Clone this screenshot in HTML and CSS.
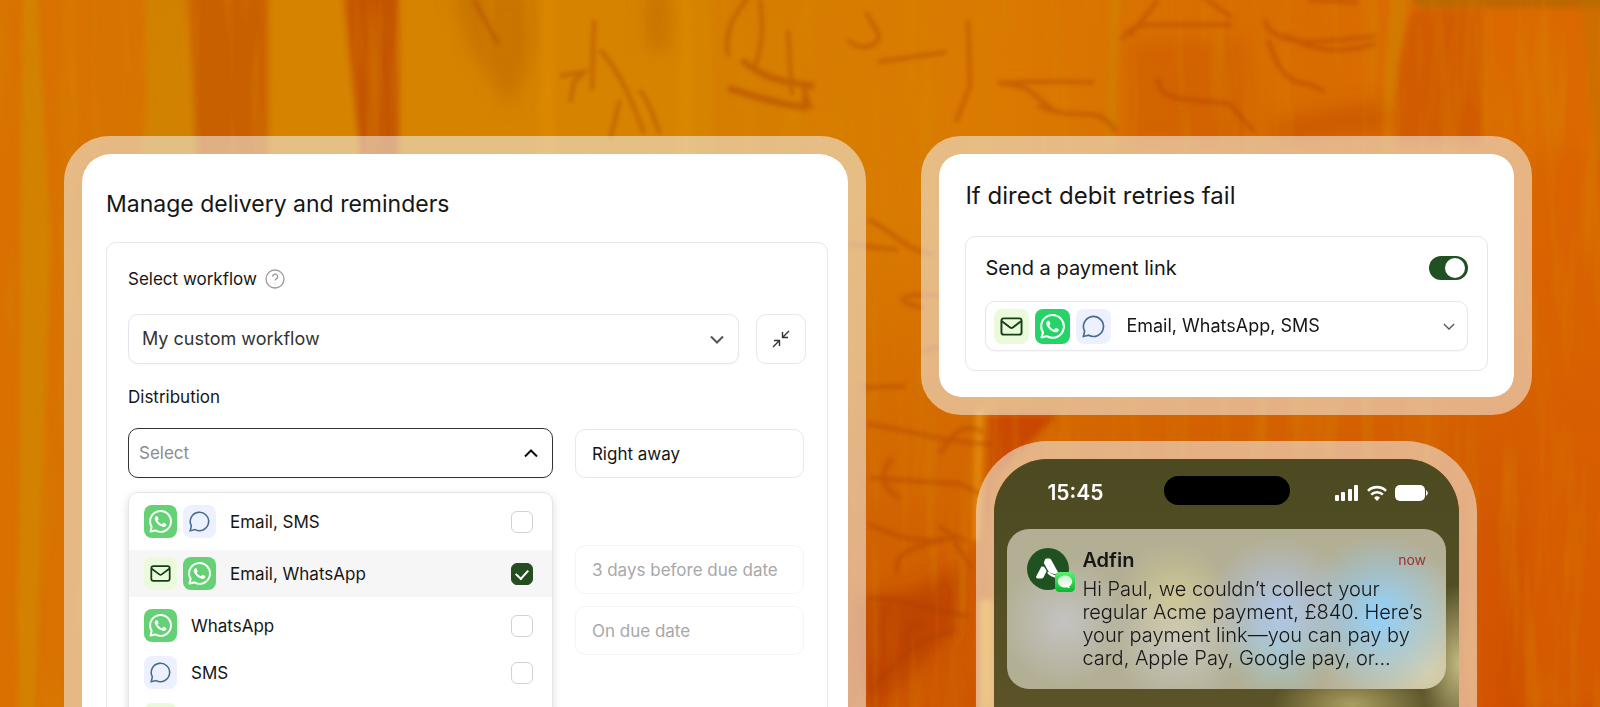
FILE: index.html
```html
<!DOCTYPE html>
<html lang="en">
<head>
    <meta charset="UTF-8">
    <meta name="viewport" content="width=device-width, initial-scale=1.0">
    <title>Manage delivery and reminders</title>
    <link rel="stylesheet" href="styles.css">
</head>
<body>
    <!-- Icon sprite -->
    <svg class="sprite" aria-hidden="true">
        <symbol id="mail" viewBox="0 0 24 24">
            <rect x="1.500" y="3.500" width="21" height="17" rx="2.5"/>
            <path d="M2 6.500 10.600 13a2.300 2.300 0 0 0 2.800 0L22 6.500"/>
        </symbol>
        <symbol id="sms" viewBox="0 0 24 24">
            <path d="M7.400 20.400A9.600 9.600 0 1 0 3.500 16.500L2.300 21.600Z"/>
        </symbol>
        <symbol id="whatsapp" viewBox="0 0 24 24">
            <path d="M17.472 14.382c-.297-.149-1.758-.867-2.03-.967-.273-.099-.471-.148-.67.15-.197.297-.767.966-.94 1.164-.173.199-.347.223-.644.075-.297-.15-1.255-.463-2.39-1.475-.883-.788-1.48-1.761-1.653-2.059-.173-.297-.018-.458.13-.606.134-.133.298-.347.446-.52.149-.174.198-.298.298-.497.099-.198.05-.371-.025-.52-.075-.149-.669-1.612-.916-2.207-.242-.579-.487-.5-.669-.51-.173-.008-.371-.01-.57-.01-.198 0-.52.074-.792.372-.272.297-1.04 1.016-1.04 2.479 0 1.462 1.065 2.875 1.213 3.074.149.198 2.096 3.2 5.077 4.487.709.306 1.262.489 1.694.625.712.227 1.36.195 1.871.118.571-.085 1.758-.719 2.006-1.413.248-.694.248-1.289.173-1.413-.074-.124-.272-.198-.57-.347m-5.421 7.403h-.004a9.87 9.87 0 01-5.031-1.378l-.361-.214-3.741.982.998-3.648-.235-.374a9.86 9.86 0 01-1.51-5.26c.001-5.45 4.436-9.884 9.888-9.884 2.64 0 5.122 1.03 6.988 2.898a9.825 9.825 0 012.893 6.994c-.003 5.45-4.437 9.884-9.885 9.884m8.413-18.297A11.815 11.815 0 0012.05 0C5.495 0 .16 5.335.157 11.892c0 2.096.547 4.142 1.588 5.945L.057 24l6.305-1.654a11.882 11.882 0 005.683 1.448h.005c6.554 0 11.89-5.335 11.893-11.893a11.821 11.821 0 00-3.48-8.413z"/>
        </symbol>
        <symbol id="chevron" viewBox="0 0 14 9">
            <path d="M1 1.500 7 7.500 13 1.500"/>
        </symbol>
    </svg>

    <!-- Woodgrain backdrop -->
    <svg class="backdrop" viewBox="0 0 1600 707" preserveAspectRatio="none" aria-hidden="true">
        <defs>
            <linearGradient id="base" x1="0" x2="1" y1="0" y2="0">
                <stop offset="0" stop-color="#d97000"/>
                <stop offset=".2" stop-color="#d47a00"/>
                <stop offset=".45" stop-color="#d57e00"/>
                <stop offset=".62" stop-color="#db7a00"/>
                <stop offset=".75" stop-color="#d86e00"/>
                <stop offset="1" stop-color="#dc6800"/>
            </linearGradient>
            <linearGradient id="deep" x1="0" x2="0" y1="0" y2="1">
                <stop offset=".3" stop-color="#c84400" stop-opacity="0"/>
                <stop offset="1" stop-color="#c84400" stop-opacity=".7"/>
            </linearGradient>
            <filter id="soft" x="-20%" width="140%" y="-20%" height="140%"><feGaussianBlur stdDeviation="3"/></filter>
            <filter id="line" x="-20%" width="140%" y="-20%" height="140%"><feGaussianBlur stdDeviation="2"/></filter>
            <filter id="wide" x="-40%" width="180%" y="-40%" height="180%"><feGaussianBlur stdDeviation="9"/></filter>
            <filter id="fibre" x="0" width="100%" y="0" height="100%">
                <feTurbulence type="fractalNoise" baseFrequency=".05 .006" numOctaves="3" seed="4"/>
                <feColorMatrix values="0 0 0 0 .68  0 0 0 0 .24  0 0 0 0 0  1.800 0 0 0 -.8"/>
            </filter>
        </defs>
        <rect width="1600" height="707" fill="url(#base)"/>
        <rect x="820" width="780" height="707" fill="url(#deep)"/>
        <g filter="url(#soft)">
            <path fill="#d28200" d="M22-10h15l14 250-16 480H18z"/>
            <path fill="#d08200" d="M146-10h37l14 150v40h-50z"/>
            <path fill="#c96000" d="M187-10h80v190h-70z"/>
            <path fill="#d68400" d="M271-10h68l24 190h-92z"/>
            <path fill="#c45400" d="M344-10h54v190h-36z"/>
            <path fill="#d68400" d="M402-10h310v190H402z"/>
            <path fill="#de8a00" d="M540-10h14v190h-14zM680-10h12v190h-12z" opacity=".7"/>
            <path fill="#cb5400" d="M1412 10c-20 60-18 100-20 135h90V10z" opacity=".6"/>
            <path fill="#c99200" d="M1110-10h10l-6 160h-8zM1390-10h20l-18 120h-8z" opacity=".4"/>
            <path fill="#a86600" d="M1400-10h210v18h-190z" opacity=".6"/>
            <path fill="#b97900" d="M1580-10h30v200h-12z" opacity=".4"/>
            <path fill="#c94700" d="M987 415h70l-60 60-12 60z"/>
            <path fill="#ef9a10" d="M976 410h7l-4 130h-6z" opacity=".8"/>
            <path fill="#ef9a10" d="M980 600h16v110h-16z"/>
        </g>
        <g filter="url(#wide)">
            <path fill="#bf6a00" d="M450-10h85v60l-25 60-40-60zM645-10h25v60h-25z" opacity=".6"/>
            <path fill="#cf5a00" d="M1126 40h118l8 105h-124z" opacity=".6"/>
            <path fill="#d65600" d="M996 540h500v180H996z" opacity=".8"/>
            <path fill="#b63c00" d="M860 720l-4-120 60-10 50-30-10 70-90 90z" opacity=".65"/>
            <path fill="#d96000" d="M1535 150h80v560h-90z" opacity=".6"/>
            <path fill="#c04c00" d="M1270 120l110-20 10 30-110 16z" opacity=".5"/>
        </g>
        <rect width="1600" height="707" filter="url(#fibre)" opacity=".55"/>
        <g class="grain" filter="url(#line)">
            <path d="M742 60c20 18 40 22 72 26M728 88c26 8 50 16 80 20" stroke-width="7"/>
            <path d="M752-8c-20 25-28 40-24 64M760 0c4 30 2 50-6 68M788 30l4 66M804 88l6 18-6-2z"/>
            <path d="M594 20l-2 70M600 50c20 20 36 60 44 84M640 90c12 16 14 30 20 44M620 100l-10 40M560 76l24-4-10 10-4 20M474 0l24 44"/>
            <path d="M866 12c8 18 16 20 12 28-6 10-24 8-30 0M878 62l68-10M968 20l2 66-14 36M998 82l28 6 30 24-18-6M1000 84c30-4 60-2 94-2M1044 108c30 14 56-6 72 24"/>
            <path d="M1122 40c8-20 30-15 110-15M1196-8l36 26M1158 78c0 28 40 20 72 26l24 28M1264 20c10 30 60 22 112 16M1268 40c20 60 36 34 56 52M1284 34c30 20 60 18 92 10M1130 36l28-36M1308 0l50 2"/>
            <path d="M868 220c20 6 36 32 66 34M848 244l50 6M924 307c-20-1-34-12-4-12h20M922 352l20-6M862 388l44-2M868 424c40 6 84 20 124 20M900 498c-20-10-20-26-8-40M870 478l90 6 20 10M868 524c30 12 40 20 84 14l20 30M938 526l28 16M952 538c-36 8-62 14-54 36M868 598c40 0 70 14 100 18M940 454c20-34 30-26 44-22M910 650c-10-20 6-30 14-24M872 690c20-24 40-50 84-60"/>
        </g>
    </svg>

    <main class="stage">
        <section class="frame frame-lg">
            <form class="panel panel-lg">
                <h1 class="panel-title">Manage delivery and reminders</h1>
                <div class="box">
                    <div class="label-row">
                        <label for="workflow">Select workflow</label>
                        <button type="button" class="help" aria-label="Help">
                            <svg viewBox="0 0 20 20"><circle cx="10" cy="10" r="9"/><path d="M7.600 7.700a2.500 2.500 0 1 1 3.700 2.200c-.9.500-1.300.9-1.300 1.700M10 14v.6"/></svg>
                        </button>
                    </div>
                    <div class="workflow-row">
                        <div class="select">
                            <select id="workflow"><option>My custom workflow</option></select>
                            <svg class="chevron"><use href="#chevron"/></svg>
                        </div>
                        <button type="button" class="icon-btn" aria-label="Collapse">
                            <svg viewBox="0 0 18 18"><path d="M17 1l-6.500 6.500M10.500 2v5.500H16M1 17l6.500-6.500M2 10.500h5.500V16"/></svg>
                        </button>
                    </div>
                    <label class="group-label" for="distribution">Distribution</label>
                    <div class="schedule">
                        <div class="channel">
                            <div class="select select-open">
                                <select id="distribution"><option>Select</option></select>
                                <svg class="chevron chevron-up"><use href="#chevron"/></svg>
                            </div>
                            <div class="menu">
                                <label class="menu-item spaced">
                                    <span class="icons">
                                        <svg class="tile whatsapp"><use href="#whatsapp"/></svg>
                                        <svg class="tile sms"><use href="#sms"/></svg>
                                    </span>
                                    Email, SMS
                                    <input type="checkbox" class="check">
                                </label>
                                <label class="menu-item spaced active">
                                    <span class="icons">
                                        <svg class="tile mail"><use href="#mail"/></svg>
                                        <svg class="tile whatsapp"><use href="#whatsapp"/></svg>
                                    </span>
                                    Email, WhatsApp
                                    <input type="checkbox" class="check" checked>
                                </label>
                                <label class="menu-item">
                                    <span class="icons">
                                        <svg class="tile whatsapp"><use href="#whatsapp"/></svg>
                                    </span>
                                    WhatsApp
                                    <input type="checkbox" class="check">
                                </label>
                                <label class="menu-item">
                                    <span class="icons">
                                        <svg class="tile sms"><use href="#sms"/></svg>
                                    </span>
                                    SMS
                                    <input type="checkbox" class="check">
                                </label>
                                <label class="menu-item">
                                    <span class="icons">
                                        <svg class="tile mail"><use href="#mail"/></svg>
                                    </span>
                                    <input type="checkbox" class="check" aria-label="Email">
                                </label>
                            </div>
                        </div>
                        <div class="times">
                            <input class="field field-first" type="text" value="Right away" aria-label="Delivery time">
                            <input class="field" type="text" value="3 days before due date" aria-label="First reminder" disabled>
                            <input class="field" type="text" value="On due date" aria-label="Second reminder" disabled>
                        </div>
                    </div>
                </div>
            </form>
        </section>

        <div class="side">
            <section class="frame">
                <form class="panel">
                    <h2 class="panel-title">If direct debit retries fail</h2>
                    <div class="box">
                        <div class="toggle-row">
                            <label for="paylink">Send a payment link</label>
                            <input type="checkbox" id="paylink" class="toggle" checked>
                        </div>
                        <div class="select">
                            <span class="icons">
                                <svg class="tile mail"><use href="#mail"/></svg>
                                <svg class="tile whatsapp"><use href="#whatsapp"/></svg>
                                <svg class="tile sms"><use href="#sms"/></svg>
                            </span>
                            <select aria-label="Channels"><option>Email, WhatsApp, SMS</option></select>
                            <svg class="chevron"><use href="#chevron"/></svg>
                        </div>
                    </div>
                </form>
            </section>

            <section class="frame phone">
                <div class="screen">
                    <div class="status">
                        <span class="clock">15:45</span>
                        <span class="island"></span>
                        <span class="signals">
                            <svg width="24" height="16" viewBox="0 0 24 16"><rect y="10" width="4" height="6" rx="1"/><rect x="6" y="7" width="4" height="9" rx="1"/><rect x="13" y="4" width="4" height="12" rx="1"/><rect x="19" width="4" height="16" rx="1"/></svg>
                            <svg width="20" height="16" viewBox="0 0 20 16"><path d="M10 16l-3-3.200a4.300 4.300 0 0 1 6 0z"/><path class="wave" d="M4.200 9.600a8.200 8.200 0 0 1 11.600 0M1 5.800a12.800 12.800 0 0 1 18 0"/></svg>
                            <svg width="33" height="16" viewBox="0 0 33 16"><rect width="30" height="16" rx="5"/><path d="M31 5.200c2.400 1 2.400 4.600 0 5.600z"/></svg>
                        </span>
                    </div>
                    <article class="notice">
                        <div class="avatar">
                            <svg viewBox="0 0 42 42">
                                <circle cx="21" cy="21" r="21" fill="#1f5122"/>
                                <path fill="#fff" d="M19.500 10.500h2.800c.8 0 1.300.4 1.700 1.100l8 14.400c-4 .8-8.600-.2-11.200-3.800l-4-7.200 1.200-3.400c.3-.7.800-1.100 1.500-1.100zM14.300 18.800c1.600-.7 3 .1 3.800 1.400l1.600 2.700-3 6.200c-.4.800-1 1.300-1.900 1.300h-4.200c-1.200 0-1.800-1-1.300-2.100z"/>
                                <path fill="none" stroke="#fff" stroke-width="2.200" d="M21 24c3 4 7 5 12 4.500"/>
                            </svg>
                            <svg class="badge" viewBox="0 0 20 20">
                                <defs>
                                    <linearGradient id="badgeFill" x1="0" x2="0" y1="0" y2="1"><stop stop-color="#5bf070"/><stop offset="1" stop-color="#08b92c"/></linearGradient>
                                    <linearGradient id="bubbleFill" x1="0" x2="0" y1="0" y2="1"><stop stop-color="#c9f3cd"/><stop offset="1" stop-color="#fff"/></linearGradient>
                                </defs>
                                <rect width="20" height="20" rx="4.500" fill="url(#badgeFill)"/>
                                <path fill="url(#bubbleFill)" d="M10 3.500c4 0 7.200 2.700 7.200 6 0 2.100-1.200 3.900-3.100 5 .1.800.5 1.300.9 1.600-1.200.1-2.200-.3-2.900-.9-.7.200-1.400.3-2.100.3-4 0-7.200-2.700-7.200-6s3.200-6 7.200-6z"/>
                            </svg>
                        </div>
                        <div class="notice-text">
                            <header class="notice-head">
                                <h3>Adfin</h3>
                                <time>now</time>
                            </header>
                            <p>Hi Paul, we couldn’t collect your regular Acme payment, £840. Here’s your payment link—you can pay by card, Apple Pay, Google pay, or...</p>
                        </div>
                    </article>
                </div>
            </section>
        </div>
    </main>
</body>
</html>
```
FILE: styles.css
```css
* {
    box-sizing: border-box;
}
body {
    margin: 0;
    height: 100vh;
    overflow: hidden;
    font-family: Inter, "Liberation Sans", sans-serif;
    font-size: 18px;
    line-height: 22px;
    color: #161616;
    background: #d97000;
}
button, input, select {
    font: inherit;
    color: inherit;
}
h1, h2, h3, p {
    margin: 0;
}
.sprite {
    display: none;
}
.backdrop {
    position: fixed;
    inset: 0;
    width: 100%;
    height: 100%;
    z-index: -1;
}
.grain {
    fill: none;
    stroke: #a83c00;
    stroke-width: 4;
    opacity: 0.42;
}

/* page columns */
.stage {
    display: grid;
    grid-template-columns: 803fr 611fr;
    gap: 55px;
    padding: 136px 68px 0 64px;
}
.side {
    display: flex;
    flex-direction: column;
    gap: 26px;
}
.frame {
    border: 18px solid rgba(242, 243, 240, 0.55);
    border-radius: 40px;
}
.frame-lg {
    border-radius: 46px;
}
.panel {
    padding: 28px 26px 26px;
    background: #fff;
    border-radius: 22px;
}
.panel-lg {
    padding: 36px 20px 26px 24px;
    min-height: 600px;
    border-radius: 28px;
}
.panel-title {
    font-size: 24px;
    line-height: 28px;
    font-weight: 400;
}
.panel-lg .panel-title {
    font-size: 23px;
}
.box {
    margin-top: 26px;
    padding: 19px;
    border: 1px solid #e6e6ec;
    border-radius: 10px;
}
.panel-lg .box {
    min-height: 500px;
    margin-top: 24px;
    padding: 25px 21px;
    font-size: 17px;
}

/* controls */
.select {
    display: flex;
    align-items: center;
    height: 50px;
    border: 1px solid #e6e6ec;
    border-radius: 10px;
    background: #fff;
    box-shadow: 0 1px 2px rgba(0, 0, 0, 0.04);
}
.select select {
    flex: 1;
    min-width: 0;
    height: 100%;
    padding: 0 13px;
    border: 0;
    background: none;
    appearance: none;
    outline: none;
}
.chevron {
    width: 14px;
    height: 9px;
    margin-right: 14px;
    fill: none;
    stroke: #555;
    stroke-width: 2;
    pointer-events: none;
}
.side .chevron {
    width: 12px;
    margin-right: 12px;
    stroke-width: 1.5;
}
.chevron-up {
    stroke: #111;
    transform: rotate(180deg);
}
.label-row {
    display: flex;
    align-items: center;
    gap: 8px;
}
.help {
    display: flex;
    padding: 0;
    border: 0;
    background: none;
}
.help svg {
    width: 20px;
    height: 20px;
    fill: none;
    stroke: #999;
    stroke-width: 1.3;
}
.workflow-row {
    display: flex;
    gap: 17px;
    margin: 24px 0 22px;
    font-size: 18px;
    color: #333;
}
.workflow-row .select {
    flex: 1;
}
.icon-btn {
    display: flex;
    align-items: center;
    justify-content: center;
    width: 50px;
    height: 50px;
    border: 1px solid #e6e6ec;
    border-radius: 10px;
    background: #fff;
}
.icon-btn svg {
    width: 18px;
    height: 18px;
    fill: none;
    stroke: #333;
    stroke-width: 1.4;
}
.group-label {
    display: block;
}
.schedule {
    display: grid;
    grid-template-columns: 424fr 229fr;
    gap: 22px;
    margin-top: 20px;
    padding-right: 2px;
}
.channel {
    position: relative;
}
.select-open {
    border-color: #333;
    color: #8c8c8c;
}
.select-open select {
    padding: 0 10px;
}
.times {
    display: flex;
    flex-direction: column;
    gap: 12px;
    padding-top: 1px;
}
.field {
    width: 100%;
    height: 49px;
    padding: 0 16px;
    border: 1px solid #e8e8ea;
    border-radius: 10px;
    background: #fff;
}
.field-first {
    margin-bottom: 55px;
}
.field:disabled {
    color: #a8a8a8;
    border-color: #f4f4f5;
}

/* dropdown menu */
.menu {
    position: absolute;
    top: 64px;
    left: 0;
    right: 0;
    padding-top: 5px;
    border: 1px solid #e6e6ea;
    border-radius: 10px;
    background: #fff;
    box-shadow: 0 3px 8px rgba(0, 0, 0, 0.14);
}
.menu-item {
    display: flex;
    align-items: center;
    gap: 14px;
    height: 47px;
    padding: 0 19px 0 15px;
}
.spaced {
    margin-bottom: 5px;
}
.active {
    background: #f6f6f6;
}
.icons {
    display: flex;
    gap: 6px;
}
.tile {
    width: 33px;
    height: 33px;
    padding: 6px;
    border-radius: 8px;
}
.side .tile {
    width: 35px;
    height: 35px;
}
.side .icons {
    padding-left: 8px;
}
.side .select select {
    padding: 0 15px;
}
.mail {
    fill: none;
    stroke: #124016;
    stroke-width: 2;
    background: #ecfadc;
}
.sms {
    padding: 5px;
    fill: none;
    stroke: #456b8f;
    stroke-width: 1.6;
    background: #edf1ff;
}
.whatsapp {
    padding: 5px;
    fill: #fff;
    background: #64d274;
}
.side .whatsapp {
    background: #25d366;
}
.check {
    width: 22px;
    height: 22px;
    margin: 0 0 0 auto;
    border: 1px solid #d2d2d2;
    border-radius: 6px;
    background: #fff;
    appearance: none;
}
.check:checked {
    display: flex;
    justify-content: center;
    padding-top: 5px;
    border-color: #264d21;
    background: #264d21;
}
.check:checked::before {
    content: "";
    width: 6px;
    height: 10px;
    border: solid #fff;
    border-width: 0 2px 2px 0;
    transform: translateY(-2px) rotate(42deg);
}

/* payment link card */
.toggle-row {
    display: flex;
    align-items: center;
    justify-content: space-between;
    margin-bottom: 21px;
    font-size: 20px;
    line-height: 24px;
}
.toggle {
    display: flex;
    justify-content: flex-end;
    width: 39px;
    height: 24px;
    margin: 0;
    padding: 2px 3px;
    border-radius: 12px;
    background: #1f5122;
    appearance: none;
}
.toggle::before {
    content: "";
    width: 20px;
    height: 20px;
    border-radius: 50%;
    background: #fff;
}

/* phone */
.phone {
    width: 82%;
    margin: 0 auto;
    border-bottom: 0;
    border-radius: 72px 72px 0 0;
}
.screen {
    min-height: 400px;
    padding: 17px 13px;
    border-radius: 54px 54px 0 0;
    background:
        radial-gradient(ellipse 40px 80px at 100% 205px, rgba(205, 195, 140, 0.9), transparent),
        radial-gradient(ellipse 80px 36px at 77% 246px, rgba(190, 178, 110, 0.8), transparent),
        linear-gradient(#4c4a22, #524e24 130px, #5c5328 250px);
}
.status {
    display: grid;
    grid-template-columns: 1fr 126px 1fr;
    align-items: end;
    margin-bottom: 24px;
    color: #fff;
}
.clock {
    padding-left: 40px;
    font-size: 21px;
    line-height: 24px;
    font-weight: 600;
}
.island {
    height: 29px;
    border-radius: 15px;
    background: #000;
}
.signals {
    display: flex;
    align-items: center;
    justify-content: flex-end;
    gap: 8px;
    height: 24px;
    padding-right: 18px;
    fill: #fff;
}
.wave {
    fill: none;
    stroke: #fff;
    stroke-width: 2.6;
}
.notice {
    display: flex;
    gap: 13px;
    padding: 19px 20px;
    border-radius: 22px;
    background:
        radial-gradient(circle 64px at 13% 58%, rgba(200, 200, 204, 0.8), transparent),
        radial-gradient(circle 56px at 38% 42%, rgba(215, 205, 135, 0.6), transparent),
        radial-gradient(circle 70px at 39% 66%, rgba(208, 208, 204, 0.8), transparent),
        radial-gradient(circle 72px at 62% 50%, rgba(178, 200, 238, 0.9), transparent),
        radial-gradient(circle 56px at 62% 72%, rgba(150, 215, 225, 0.6), transparent),
        radial-gradient(circle 80px at 85% 54%, rgba(146, 208, 252, 1), transparent),
        radial-gradient(circle 110px at 96% 88%, rgba(218, 210, 175, 0.9), transparent),
        #b3af95;
}
.avatar {
    position: relative;
    flex: none;
    width: 42px;
    height: 42px;
}
.avatar svg {
    display: block;
}
.avatar .badge {
    position: absolute;
    right: -6px;
    bottom: -2px;
    width: 20px;
    height: 20px;
}
.notice-text {
    flex: 1;
}
.notice-head {
    display: flex;
    align-items: center;
    justify-content: space-between;
    margin-bottom: 6px;
    line-height: 24px;
}
.notice-head h3 {
    font-size: 20px;
    font-weight: 600;
}
.notice-head time {
    font-size: 14px;
    line-height: 16px;
    color: #a03030;
}
.notice p {
    font-size: 20px;
    line-height: 23px;
    font-weight: 300;
}
```
